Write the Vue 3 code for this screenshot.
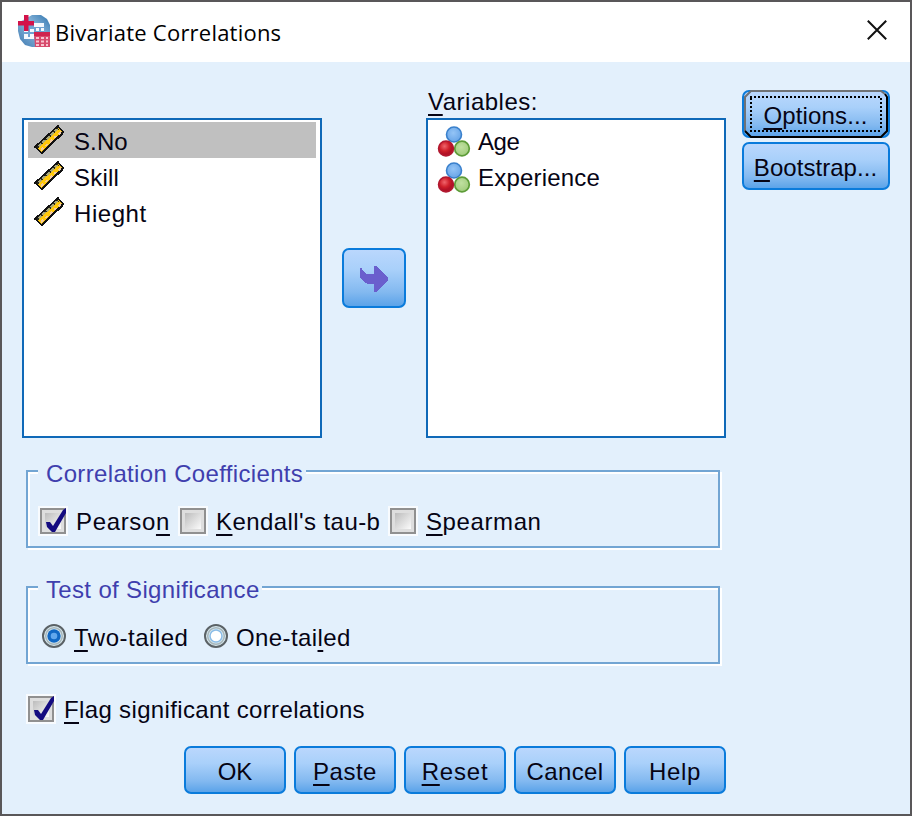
<script setup>
import { ref } from 'vue'

const source = [
  { name: 'S.No', gap: 0.1 },
  { name: 'Skill', gap: 0.2 },
  { name: 'Hieght', gap: 0.55 }
]
const selected = ref('S.No')
const variables = [
  { name: 'Age', gap: -0.4 },
  { name: 'Experience', gap: 0.2 }
]
const coefficients = ref([
  { pre: 'Pearso', key: 'n', post: '', on: true, gap: 0.65, width: 104 },
  { pre: '', key: 'K', post: "endall's tau-b", on: false, gap: 0.42, width: 174 },
  { pre: '', key: 'S', post: 'pearman', on: false, gap: 0.6, width: 130 }
])
const tests = [
  { pre: '', key: 'T', post: 'wo-tailed', gap: 0.5, width: 128 },
  { pre: 'One-tai', key: 'l', post: 'ed', gap: 0.4, width: 130 }
]
const tail = ref(0)
const flag = ref(true)
const actions = [
  { key: '', post: 'OK', gap: -0.2 },
  { key: 'P', post: 'aste', gap: 0.5 },
  { key: 'R', post: 'eset', gap: 0.8 },
  { key: '', post: 'Cancel', gap: 0.4 },
  { key: '', post: 'Help', gap: 0.6 }
]
</script>

<template>
  <div class="window">
    <header class="titlebar">
      <svg class="app-icon" width="32" height="32" viewBox="0 0 32 32">
        <defs>
          <linearGradient id="globe" x1="1" y1="0" x2="0" y2="1">
            <stop offset="0" stop-color="#2f74ae" />
            <stop offset=".45" stop-color="#8db9dc" />
            <stop offset="1" stop-color="#3c78b0" />
          </linearGradient>
        </defs>
        <path d="M14 0h9l6 4 3 6v22H14l-7-2-5-6-2-8V8z" fill="url(#globe)" />
        <path d="M6 8h20v14H6z" fill="#6fa3d2" />
        <path d="M16 8h10v4H16zM6 14h4v3H6zM12 14h4v3h-4zM18 13h3v3h-3zM23 13h3v3h-3zM6 19h4v3H6zM12 19h4v3h-4zM6 22h10v2H6z" fill="#f3f8fd" />
        <path d="M0 6h16v4.500H0zM6 0h4.500v16H6z" fill="#d3124a" />
        <path d="M16 17h16v15H17z" fill="#d74a6c" />
        <path d="M16 17h16v4H16z" fill="#cf234e" />
        <path d="M18 22h3v2h-3zM23 22h3v2h-3zM28 22h2v2h-2zM18 25.500h3v2h-3zM23 25.500h3v2h-3zM28 25.500h2v2h-2zM18 29h3v2h-3zM23 29h3v2h-3zM28 29h2v2h-2z" fill="#f7c4d0" />
      </svg>
      <h1>Bivariate Correlations</h1>
      <svg class="close" width="20" height="20" viewBox="0 0 20 20">
        <path d="M.8.800 19.200 19.200M19.200.8.800 19.200" stroke="#111" stroke-width="2" />
      </svg>
    </header>

    <main>
      <section class="transfer">
        <ul class="list">
          <li v-for="v in source" :key="v.name" :class="{ selected: v.name === selected }" @click="selected = v.name">
            <svg class="ruler" width="30" height="30" viewBox="0 0 30 30" shape-rendering="crispEdges">
              <path d="M1 22 24 1l5 6L8 28z" fill="#ffc80a" stroke="#111" stroke-width="1.500" />
              <path d="M3 22 24 3" stroke="#a9a878" stroke-width="3" />
              <path d="M3 22 24 3" stroke="#2a281a" stroke-width="3" stroke-dasharray="1.500 4" />
              <path d="M7 25 27 7" stroke="#f3c9a0" stroke-width="2" stroke-dasharray="3 3" />
              <path d="M1 22 24 1M8 28 29 8" stroke="#111" stroke-width="1.800" />
            </svg>
            <span :style="{ letterSpacing: v.gap + 'px' }">{{ v.name }}</span>
          </li>
        </ul>

        <button class="btn move" aria-label="Move">
          <svg width="28" height="26" viewBox="0 0 28 26" shape-rendering="crispEdges">
            <path d="M0 2h2v2l2 2 2 2h8V0h2l12 12v2L16 26h-2v-8H8l-4-2-2-3-2-1z" fill="#6a5fcd" />
          </svg>
        </button>

        <div class="targets">
          <div class="caption"><u>V</u>ariables:</div>
          <ul class="list">
            <li v-for="v in variables" :key="v.name">
              <svg class="nominal" width="32" height="32" viewBox="0 0 32 32">
                <defs>
                  <radialGradient id="red" cx=".4" cy=".35"><stop offset="0" stop-color="#f0656c" /><stop offset=".65" stop-color="#cf1f2a" /><stop offset="1" stop-color="#b31226" /></radialGradient>
                  <radialGradient id="green" cx=".45" cy=".4"><stop offset="0" stop-color="#c0e0a0" /><stop offset="1" stop-color="#a6cf82" /></radialGradient>
                  <radialGradient id="blue" cx=".45" cy=".4"><stop offset="0" stop-color="#94c4f6" /><stop offset="1" stop-color="#6faaea" /></radialGradient>
                </defs>
                <circle cx="16" cy="8.500" r="7.500" fill="url(#blue)" stroke="#3a80cc" stroke-width="1.600" />
                <circle cx="24" cy="22.500" r="7.300" fill="url(#green)" stroke="#5d9c38" stroke-width="1.700" />
                <circle cx="8" cy="22.500" r="7.500" fill="url(#red)" stroke="#b01830" stroke-width="1.500" />
              </svg>
              <span :style="{ letterSpacing: v.gap + 'px' }">{{ v.name }}</span>
            </li>
          </ul>
        </div>

        <div class="side">
          <button class="btn focused">
            <svg width="148" height="48" viewBox="0 0 148 48">
              <path d="M3 41V7l6-6h130l4 3" fill="none" stroke="#6f7276" stroke-width="2" />
              <path d="M143 4l2 3v34l-6 6H9l-6-6" fill="none" stroke="#000" stroke-width="2" />
              <path d="M8 7h132M8 41h132" stroke="#000" stroke-width="2" stroke-dasharray="2 2" />
              <path d="M9 8v32M139 8v32" stroke="#000" stroke-width="2" stroke-dasharray="2 2" />
            </svg>
            <span class="options"><u>O</u>ptions...</span>
          </button>
          <button class="btn"><span class="bootstrap"><u>B</u>ootstrap...</span></button>
        </div>
      </section>

      <section class="group">
        <div class="legend coef">Correlation Coefficients</div>
        <div class="choices">
          <label v-for="c in coefficients" :key="c.key" :style="{ width: c.width + 36 + 'px' }" @click="c.on = !c.on">
            <span class="check">
              <svg v-if="c.on" width="24" height="26" viewBox="0 0 24 26"><path d="M2 13h4l3 4L19 1l3-2v5l-7 12-4 7H8l-5-5z" fill="#140b80" /></svg>
            </span>
            <span class="text" :style="{ letterSpacing: c.gap + 'px' }">{{ c.pre }}<u>{{ c.key }}</u>{{ c.post }}</span>
          </label>
        </div>
      </section>

      <section class="group second">
        <div class="legend sig">Test of Significance</div>
        <div class="choices radios">
          <label v-for="(t, i) in tests" :key="t.key" :style="{ width: t.width + 34 + 'px' }" @click="tail = i">
            <svg class="radio" width="24" height="24" viewBox="0 0 24 24">
              <circle cx="12" cy="12" r="11" fill="#d9e9ee" stroke="#5b6266" stroke-width="2" />
              <circle cx="12" cy="12" r="8.300" fill="none" stroke="#a7b6bc" stroke-width="1.500" />
              <circle v-if="tail === i" cx="12" cy="12" r="6.700" fill="#1168c4" />
              <circle v-if="tail === i" cx="12" cy="12" r="3.300" fill="#62a7ec" />
              <circle v-else cx="12" cy="12" r="6" fill="#fff" stroke="#8bbde8" stroke-width="1.500" />
            </svg>
            <span class="text" :style="{ letterSpacing: t.gap + 'px' }">{{ t.pre }}<u>{{ t.key }}</u>{{ t.post }}</span>
          </label>
        </div>
      </section>

      <label class="flag" @click="flag = !flag">
        <span class="check">
          <svg v-if="flag" width="24" height="26" viewBox="0 0 24 26"><path d="M2 13h4l3 4L19 1l3-2v5l-7 12-4 7H8l-5-5z" fill="#140b80" /></svg>
        </span>
        <span class="text flag-text"><u>F</u>lag significant correlations</span>
      </label>

      <footer>
        <button v-for="a in actions" :key="a.post" class="btn">
          <span :style="{ letterSpacing: a.gap + 'px' }"><u>{{ a.key }}</u>{{ a.post }}</span>
        </button>
      </footer>
    </main>
  </div>
</template>

<style>
body { margin: 0; }
</style>

<style scoped>
* { box-sizing: border-box; }
.window {
  width: 912px;
  height: 816px;
  border: 2px solid #595759;
  background: #e3f0fc;
  font: 24px/36px "Liberation Sans", Arial, sans-serif;
  color: #060414;
  overflow: hidden;
  white-space: nowrap;
}
svg { display: block; flex: none; overflow: visible; }
u {
  text-decoration: underline;
  text-decoration-thickness: 2px;
  text-underline-offset: 4px;
  text-decoration-skip-ink: none;
}
.titlebar {
  display: flex;
  height: 60px;
  padding: 0 23px 0 16px;
  background: #fff;
}
.app-icon { margin-top: 13px; }
h1 {
  margin: 12px auto 0 5px;
  font: 400 22px/36px "Open Sans", "Noto Sans", sans-serif;
  letter-spacing: .22px;
  color: #000;
}
.close { margin-top: 18px; }
main { padding: 26px 20px 0; }
.transfer { display: flex; align-items: flex-start; height: 350px; }
.list {
  width: 300px;
  height: 320px;
  margin: 0;
  padding: 2px 4px;
  list-style: none;
  background: #fff;
  border: 2px solid #0f69b8;
}
.transfer > .list { margin-top: 30px; }
.list li {
  display: flex;
  align-items: center;
  height: 36px;
  padding-left: 6px;
  gap: 10px;
}
.list li span { padding-top: 3px; }
.targets .list li { gap: 8px; }
.list .selected { background: #c0c0c0; }
.ruler { margin-top: -1px; }
.nominal { margin-top: 4px; }
.btn {
  display: flex;
  align-items: center;
  justify-content: center;
  width: 148px;
  height: 48px;
  padding: 3px 0 0;
  font: inherit;
  color: inherit;
  background: linear-gradient(#bad7fd, #a9d0fa 35%, #83b9f0 75%, #5ba3e9);
  border: 2px solid #0a7bdb;
  border-radius: 7px;
}
.move { width: 64px; height: 60px; margin: 160px 20px 0; padding: 2px 1px 0 0; }
.targets { width: 300px; }
.caption { height: 30px; line-height: 27px; padding-left: 2px; letter-spacing: .5px; }
.side { display: grid; gap: 4px; margin: 2px 0 0 16px; }
.side .btn { padding-right: 1px; }
.focused { position: relative; }
.focused svg { position: absolute; left: -2px; top: -2px; }
.options { letter-spacing: .15px; }
.bootstrap { letter-spacing: .05px; }
.group {
  width: 694px;
  height: 78px;
  margin: 32px 0 0 4px;
  border: 2px solid #72a5d3;
  box-shadow: 2px 2px 0 #fff, inset 2px 2px 0 #fff;
}
.second { margin-top: 38px; }
.legend {
  position: relative;
  width: 268px;
  height: 32px;
  margin: -16px 0 0 10px;
  padding-left: 8px;
  line-height: 35px;
  letter-spacing: .34px;
  color: #3f3fae;
  background: #e3f0fc;
}
.sig { width: 224px; }
.choices { display: flex; padding: 15px 0 0 12px; }
label { display: flex; align-items: center; height: 36px; }
.text { padding-top: 1px; }
.check {
  flex: none;
  width: 26px;
  height: 26px;
  margin-right: 10px;
  border: 2px solid #909090;
  background: linear-gradient(135deg, #bcbcbc, #fbfbfb) center / 16px 16px no-repeat, #dedede;
  outline: 2px solid #f8fbfe;
}
.check svg { margin: -1px 0 0 2px; }
.radios { padding-left: 14px; }
.radio { margin: -2px 8px 0 0; }
.flag { width: 340px; margin: 27px 0 0 6px; }
.flag-text { letter-spacing: .35px; }
footer { display: flex; gap: 8px; margin: 19px 0 0 162px; }
footer .btn { width: 102px; }
</style>
